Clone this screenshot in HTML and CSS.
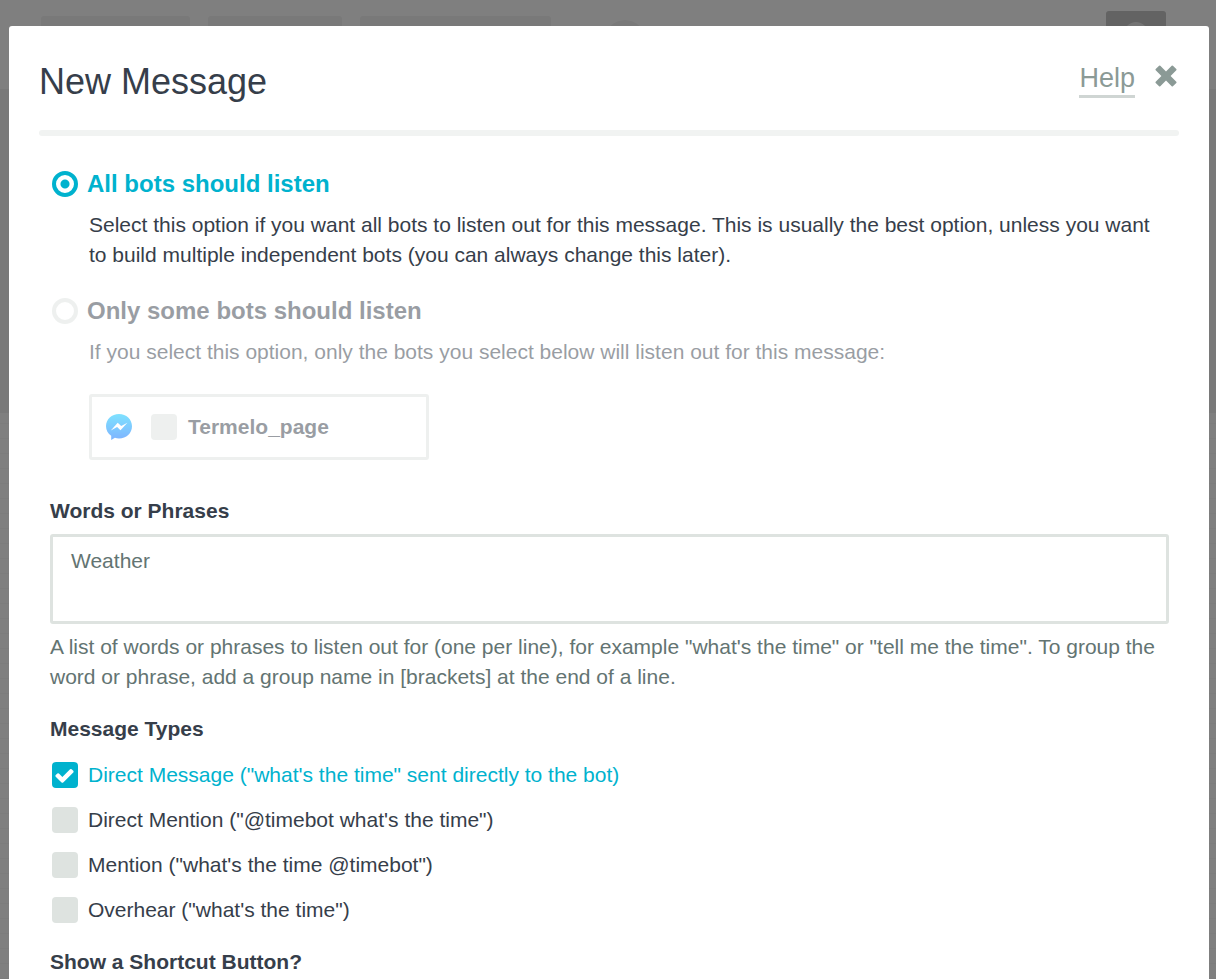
FILE: index.html
```html
<!DOCTYPE html>
<html lang="en">
<head>
    <meta charset="UTF-8">
    <meta name="viewport" content="width=device-width, initial-scale=1.0">
    <title>New Message</title>
    <link rel="stylesheet" href="styles.css">
</head>
<body>
    <!-- Page behind the dialog -->
    <div class="page" aria-hidden="true">
        <div class="topbar">
            <div class="tab tab-medium"></div>
            <div class="tab tab-small"></div>
            <div class="tab tab-large"></div>
            <div class="topbar-dot"></div>
            <div class="account"><div class="avatar"></div></div>
        </div>
        <div class="banner"></div>
        <div class="canvas-grid"></div>
    </div>

    <div class="overlay">
        <div class="modal" role="dialog" aria-labelledby="modal-title">
            <header class="modal-header">
                <h1 id="modal-title">New Message</h1>
                <div class="modal-actions">
                    <a href="#help" class="help-link">Help</a>
                    <button type="button" class="close-btn" aria-label="Close">
                        <svg viewBox="0 0 22 22"><path d="M5.300.7 11 6.400 16.700.7q.6-.6 1.200 0l3.400 3.400q.6.600 0 1.200L15.600 11l5.700 5.700q.6.600 0 1.200l-3.400 3.400q-.6.600-1.200 0L11 15.600l-5.700 5.700q-.6.600-1.200 0L.7 17.900q-.6-.6 0-1.200L6.400 11 .7 5.300q-.6-.6 0-1.200L4.100.7q.6-.6 1.200 0z"/></svg>
                    </button>
                </div>
            </header>

            <form class="modal-body">
                <section class="option">
                    <label class="option-label active">
                        <input type="radio" name="listen" checked>
                        All bots should listen
                    </label>
                    <p>Select this option if you want all bots to listen out for this message. This is usually the best option, unless you want to build multiple independent bots (you can always change this later).</p>
                </section>

                <section class="option faded">
                    <label class="option-label">
                        <input type="radio" name="listen">
                        Only some bots should listen
                    </label>
                    <p>If you select this option, only the bots you select below will listen out for this message:</p>
                    <label class="bot-card">
                        <svg class="messenger" viewBox="0 0 26 26">
                            <defs>
                                <linearGradient id="messenger-fill" x1="0" y1="0" x2="0" y2="1">
                                    <stop offset="0" stop-color="#00c6ff"/>
                                    <stop offset="1" stop-color="#006aff"/>
                                </linearGradient>
                            </defs>
                            <path fill="url(#messenger-fill)" d="M13 0c7.300 0 13 5.300 13 12.200S20.300 24.400 13 24.400c-1.400 0-2.800-.2-4.100-.6L5.200 26v-4.200C2 19.500 0 16.100 0 12.200 0 5.300 5.700 0 13 0z"/>
                            <path fill="#fff" d="M4.800 16.400 11.700 8.800l3.500 3.300 6.200-3.300-6.900 7.500-3.400-3.400z"/>
                        </svg>
                        <input type="checkbox" name="bot">
                        Termelo_page
                    </label>
                </section>

                <section class="field">
                    <label class="field-title" for="phrases">Words or Phrases</label>
                    <textarea id="phrases">Weather</textarea>
                    <p class="hint">A list of words or phrases to listen out for (one per line), for example "what's the time" or "tell me the time". To group the word or phrase, add a group name in [brackets] at the end of a line.</p>
                </section>

                <section class="field">
                    <h2 class="field-title">Message Types</h2>
                    <div class="check-list">
                        <label class="check active">
                            <input type="checkbox" name="type" checked>
                            <svg class="tick" viewBox="0 0 1792 1792"><path d="M1671 566q0 40-28 68l-724 724-136 136q-28 28-68 28t-68-28l-136-136-362-362q-28-28-28-68t28-68l136-136q28-28 68-28t68 28l294 295 656-657q28-28 68-28t68 28l136 136q28 28 28 68z"/></svg>
                            Direct Message ("what's the time" sent directly to the bot)
                        </label>
                        <label class="check">
                            <input type="checkbox" name="type">
                            Direct Mention ("@timebot what's the time")
                        </label>
                        <label class="check">
                            <input type="checkbox" name="type">
                            Mention ("what's the time @timebot")
                        </label>
                        <label class="check">
                            <input type="checkbox" name="type">
                            Overhear ("what's the time")
                        </label>
                    </div>
                </section>

                <section class="field">
                    <h2 class="field-title">Show a Shortcut Button?</h2>
                </section>
            </form>
        </div>
    </div>
</body>
</html>
```
FILE: styles.css
```css
* {
    margin: 0;
    padding: 0;
    box-sizing: border-box;
}

body {
    height: 100vh;
    overflow: hidden;
    background: #fff;
    color: #363e4a;
    font-family: 'Liberation Sans', Arial, sans-serif;
    font-size: 21px;
    line-height: 30px;
}

/* Background page */
.page {
    height: 100vh;
    display: flex;
    flex-direction: column;
}

.topbar {
    height: 89px;
    flex: none;
    display: flex;
    align-items: flex-start;
    gap: 18px;
    padding: 11px 50px 0 41px;
}

.tab {
    height: 50px;
    margin-top: 5px;
    background: #f2f2f2;
    border-radius: 3px;
}

.tab-small {
    width: 134px;
}

.tab-medium {
    width: 149px;
}

.tab-large {
    width: 191px;
}

.topbar-dot {
    width: 40px;
    height: 40px;
    margin: 9px 0 0 36px;
    background: #f2f2f2;
    border-radius: 50%;
}

.account {
    width: 60px;
    height: 60px;
    margin-left: auto;
    padding-top: 11px;
    background: #c6c6c6;
    border-radius: 3px;
}

.avatar {
    width: 24px;
    height: 24px;
    margin: 0 auto;
    background: #e8e8e8;
    border-radius: 50%;
}

.banner {
    height: 324px;
    flex: none;
    background: #f2f2f2;
}

.canvas-grid {
    flex: 1;
    background: repeating-linear-gradient(#fff 0 10px, #f8f8f8 10px 11px, #fff 11px 15px);
}

/* Dialog */
.overlay {
    position: fixed;
    inset: 0;
    padding: 26px 7px 0 9px;
    overflow: hidden;
    background: rgba(0, 0, 0, 0.5);
}

.modal {
    min-height: 100vh;
    padding: 30px;
    background: #fff;
    border-radius: 3px;
}

.modal-header {
    position: relative;
    display: flex;
    justify-content: space-between;
    padding-bottom: 28px;
}

.modal-header::after {
    content: "";
    position: absolute;
    left: 0;
    right: 0;
    bottom: 0;
    height: 6px;
    background: #f1f3f2;
    border-radius: 3px;
}

h1 {
    font-size: 36px;
    font-weight: normal;
    line-height: 52px;
}

.modal-actions {
    display: flex;
    align-items: flex-start;
    gap: 20px;
    padding-right: 2px;
}

.help-link {
    margin-top: 5px;
    border-bottom: 3px solid #cfd5d3;
    color: #8b9a96;
    font-size: 27px;
    line-height: 34px;
    text-decoration: none;
}

.close-btn {
    width: 22px;
    height: 22px;
    margin-top: 9px;
    background: none;
    border: none;
    cursor: pointer;
}

.close-btn svg {
    display: block;
    fill: #8b9a96;
}

.modal-body {
    padding: 33px 10px 0 11px;
}

input {
    appearance: none;
    flex: none;
    width: 26px;
    height: 26px;
}

input[type="radio"] {
    border: 4px solid #dee3e0;
    border-radius: 50%;
}

input[type="radio"]:checked {
    border-color: #00b2ce;
    background: radial-gradient(circle, #00b2ce 4px, #fff 5px);
}

input[type="checkbox"] {
    background: #dee3e0;
    border-radius: 4px;
}

input[type="checkbox"]:checked {
    background: #00b2ce;
}

.option {
    margin-bottom: 26px;
}

.option-label {
    display: flex;
    align-items: center;
    gap: 9px;
    padding-left: 2px;
    font-size: 24px;
    font-weight: bold;
}

.option p {
    margin: 11px 0 0 39px;
}

.faded {
    margin-bottom: 36px;
    opacity: 0.5;
}

.active {
    color: #00b2ce;
}

.bot-card {
    display: flex;
    align-items: center;
    width: 340px;
    height: 66px;
    margin: 27px 0 0 39px;
    padding-left: 14px;
    border: 3px solid #dee3e0;
    border-radius: 3px;
    font-weight: bold;
}

.messenger {
    width: 26px;
    height: 26px;
    margin-right: 19px;
}

.bot-card input {
    margin-right: 11px;
}

.field {
    margin-bottom: 22px;
}

.field-title {
    display: block;
    font-size: 21px;
    font-weight: bold;
}

textarea {
    display: block;
    width: 100%;
    height: 90px;
    margin: 8px 0;
    padding: 9px 18px;
    border: 3px solid #dee3e0;
    border-radius: 3px;
    background: #fff;
    color: #637472;
    font: inherit;
    resize: none;
}

.hint {
    color: #637472;
}

.check-list {
    display: flex;
    flex-direction: column;
    gap: 15px;
    margin-top: 16px;
}

.check {
    position: relative;
    display: flex;
    align-items: center;
    gap: 10px;
    padding-left: 2px;
}

.tick {
    position: absolute;
    left: 4px;
    width: 21px;
    height: 21px;
    fill: #fff;
}
```
